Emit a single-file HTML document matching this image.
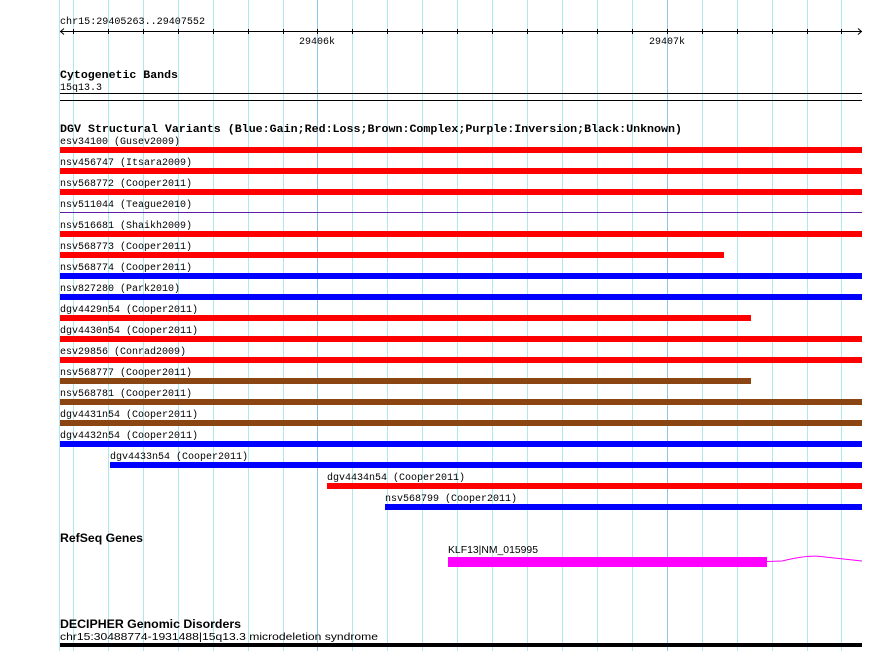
<!DOCTYPE html>
<html><head><meta charset="utf-8"><style>
html,body{margin:0;padding:0;background:#fff;}
svg{display:block;}
text{font-family:"Liberation Mono","DejaVu Sans Mono",monospace;font-size:10px;fill:#000;}
.b{font-weight:bold;font-size:11.4px;}
.s{font-family:"Liberation Sans",sans-serif;font-size:10.5px;}
.sb{font-family:"Liberation Sans",sans-serif;font-size:11.5px;font-weight:bold;}
</style></head><body>
<svg width="890" height="651" viewBox="0 0 890 651" xmlns="http://www.w3.org/2000/svg">
<g stroke="#aee8ee" stroke-width="1">
<line x1="59.5" y1="0" x2="59.5" y2="651"/>
<line x1="73.5" y1="0" x2="73.5" y2="651"/>
<line x1="108.5" y1="0" x2="108.5" y2="651"/>
<line x1="143.5" y1="0" x2="143.5" y2="651"/>
<line x1="178.5" y1="0" x2="178.5" y2="651"/>
<line x1="213.5" y1="0" x2="213.5" y2="651"/>
<line x1="248.5" y1="0" x2="248.5" y2="651"/>
<line x1="283.5" y1="0" x2="283.5" y2="651"/>
<line x1="352.5" y1="0" x2="352.5" y2="651"/>
<line x1="387.5" y1="0" x2="387.5" y2="651"/>
<line x1="422.5" y1="0" x2="422.5" y2="651"/>
<line x1="457.5" y1="0" x2="457.5" y2="651"/>
<line x1="492.5" y1="0" x2="492.5" y2="651"/>
<line x1="527.5" y1="0" x2="527.5" y2="651"/>
<line x1="562.5" y1="0" x2="562.5" y2="651"/>
<line x1="597.5" y1="0" x2="597.5" y2="651"/>
<line x1="632.5" y1="0" x2="632.5" y2="651"/>
<line x1="702.5" y1="0" x2="702.5" y2="651"/>
<line x1="737.5" y1="0" x2="737.5" y2="651"/>
<line x1="772.5" y1="0" x2="772.5" y2="651"/>
<line x1="807.5" y1="0" x2="807.5" y2="651"/>
<line x1="841.5" y1="0" x2="841.5" y2="651"/>
</g>
<g stroke="#8fc4e6" stroke-width="1">
<line x1="317.5" y1="0" x2="317.5" y2="651"/>
<line x1="667.5" y1="0" x2="667.5" y2="651"/>
</g>
<text x="60" y="24" textLength="145" lengthAdjust="spacingAndGlyphs">chr15:29405263..29407552</text>
<g stroke="#000" stroke-width="1" fill="none">
<line x1="60" y1="31.5" x2="862" y2="31.5"/>
<polyline points="64,28.5 60.5,31.5 64,34.5"/>
<polyline points="858,28.5 861.5,31.5 858,34.5"/>
<path d="M73.5 29v5M108.5 29v5M143.5 29v5M178.5 29v5M213.5 29v5M248.5 29v5M283.5 29v5M317.5 29v5M352.5 29v5M387.5 29v5M422.5 29v5M457.5 29v5M492.5 29v5M527.5 29v5M562.5 29v5M597.5 29v5M632.5 29v5M667.5 29v5M702.5 29v5M737.5 29v5M772.5 29v5M807.5 29v5M841.5 29v5"/>
</g>
<text x="317" y="44" text-anchor="middle">29406k</text>
<text x="667" y="44" text-anchor="middle">29407k</text>
<text class="b" x="60" y="78" textLength="118" lengthAdjust="spacingAndGlyphs">Cytogenetic Bands</text>
<text x="60" y="90">15q13.3</text>
<rect x="60" y="93" width="802" height="1" fill="#000"/>
<rect x="60" y="100" width="802" height="1" fill="#000"/>
<text class="b" x="60" y="132" textLength="622" lengthAdjust="spacingAndGlyphs">DGV Structural Variants (Blue:Gain;Red:Loss;Brown:Complex;Purple:Inversion;Black:Unknown)</text>
<text x="60" y="144">esv34100 (Gusev2009)</text>
<rect x="60" y="147" width="802" height="6" fill="#f00"/>
<text x="60" y="165">nsv456747 (Itsara2009)</text>
<rect x="60" y="168" width="802" height="6" fill="#f00"/>
<text x="60" y="186">nsv568772 (Cooper2011)</text>
<rect x="60" y="189" width="802" height="6" fill="#f00"/>
<text x="60" y="207">nsv511044 (Teague2010)</text>
<rect x="60" y="212" width="802" height="1" fill="#5a1ea0"/>
<text x="60" y="228">nsv516681 (Shaikh2009)</text>
<rect x="60" y="231" width="802" height="6" fill="#f00"/>
<text x="60" y="249">nsv568773 (Cooper2011)</text>
<rect x="60" y="252" width="664" height="6" fill="#f00"/>
<text x="60" y="270">nsv568774 (Cooper2011)</text>
<rect x="60" y="273" width="802" height="6" fill="#00f"/>
<text x="60" y="291">nsv827280 (Park2010)</text>
<rect x="60" y="294" width="802" height="6" fill="#00f"/>
<text x="60" y="312">dgv4429n54 (Cooper2011)</text>
<rect x="60" y="315" width="691" height="6" fill="#f00"/>
<text x="60" y="333">dgv4430n54 (Cooper2011)</text>
<rect x="60" y="336" width="802" height="6" fill="#f00"/>
<text x="60" y="354">esv29856 (Conrad2009)</text>
<rect x="60" y="357" width="802" height="6" fill="#f00"/>
<text x="60" y="375">nsv568777 (Cooper2011)</text>
<rect x="60" y="378" width="691" height="6" fill="#8b4513"/>
<text x="60" y="396">nsv568781 (Cooper2011)</text>
<rect x="60" y="399" width="802" height="6" fill="#8b4513"/>
<text x="60" y="417">dgv4431n54 (Cooper2011)</text>
<rect x="60" y="420" width="802" height="6" fill="#8b4513"/>
<text x="60" y="438">dgv4432n54 (Cooper2011)</text>
<rect x="60" y="441" width="802" height="6" fill="#00f"/>
<text x="110" y="459">dgv4433n54 (Cooper2011)</text>
<rect x="110" y="462" width="752" height="6" fill="#00f"/>
<text x="327" y="480">dgv4434n54 (Cooper2011)</text>
<rect x="327" y="483" width="535" height="6" fill="#f00"/>
<text x="385" y="501">nsv568799 (Cooper2011)</text>
<rect x="385" y="504" width="477" height="6" fill="#00f"/>
<text class="sb" x="60" y="542" textLength="83" lengthAdjust="spacingAndGlyphs">RefSeq Genes</text>
<text class="s" x="448" y="553" textLength="90" lengthAdjust="spacingAndGlyphs">KLF13|NM_015995</text>
<rect x="448" y="557" width="319" height="10" fill="#f0f"/>
<path d="M767 561.5 L782 561 Q810 554 825 557 L862 561" stroke="#f0f" stroke-width="1" fill="none"/>
<text class="sb" x="60" y="628" textLength="181" lengthAdjust="spacingAndGlyphs">DECIPHER Genomic Disorders</text>
<text class="s" x="60" y="640" textLength="318" lengthAdjust="spacingAndGlyphs">chr15:30488774-1931488|15q13.3 microdeletion syndrome</text>
<rect x="60" y="643" width="802" height="4" fill="#000"/>
</svg>
</body></html>
